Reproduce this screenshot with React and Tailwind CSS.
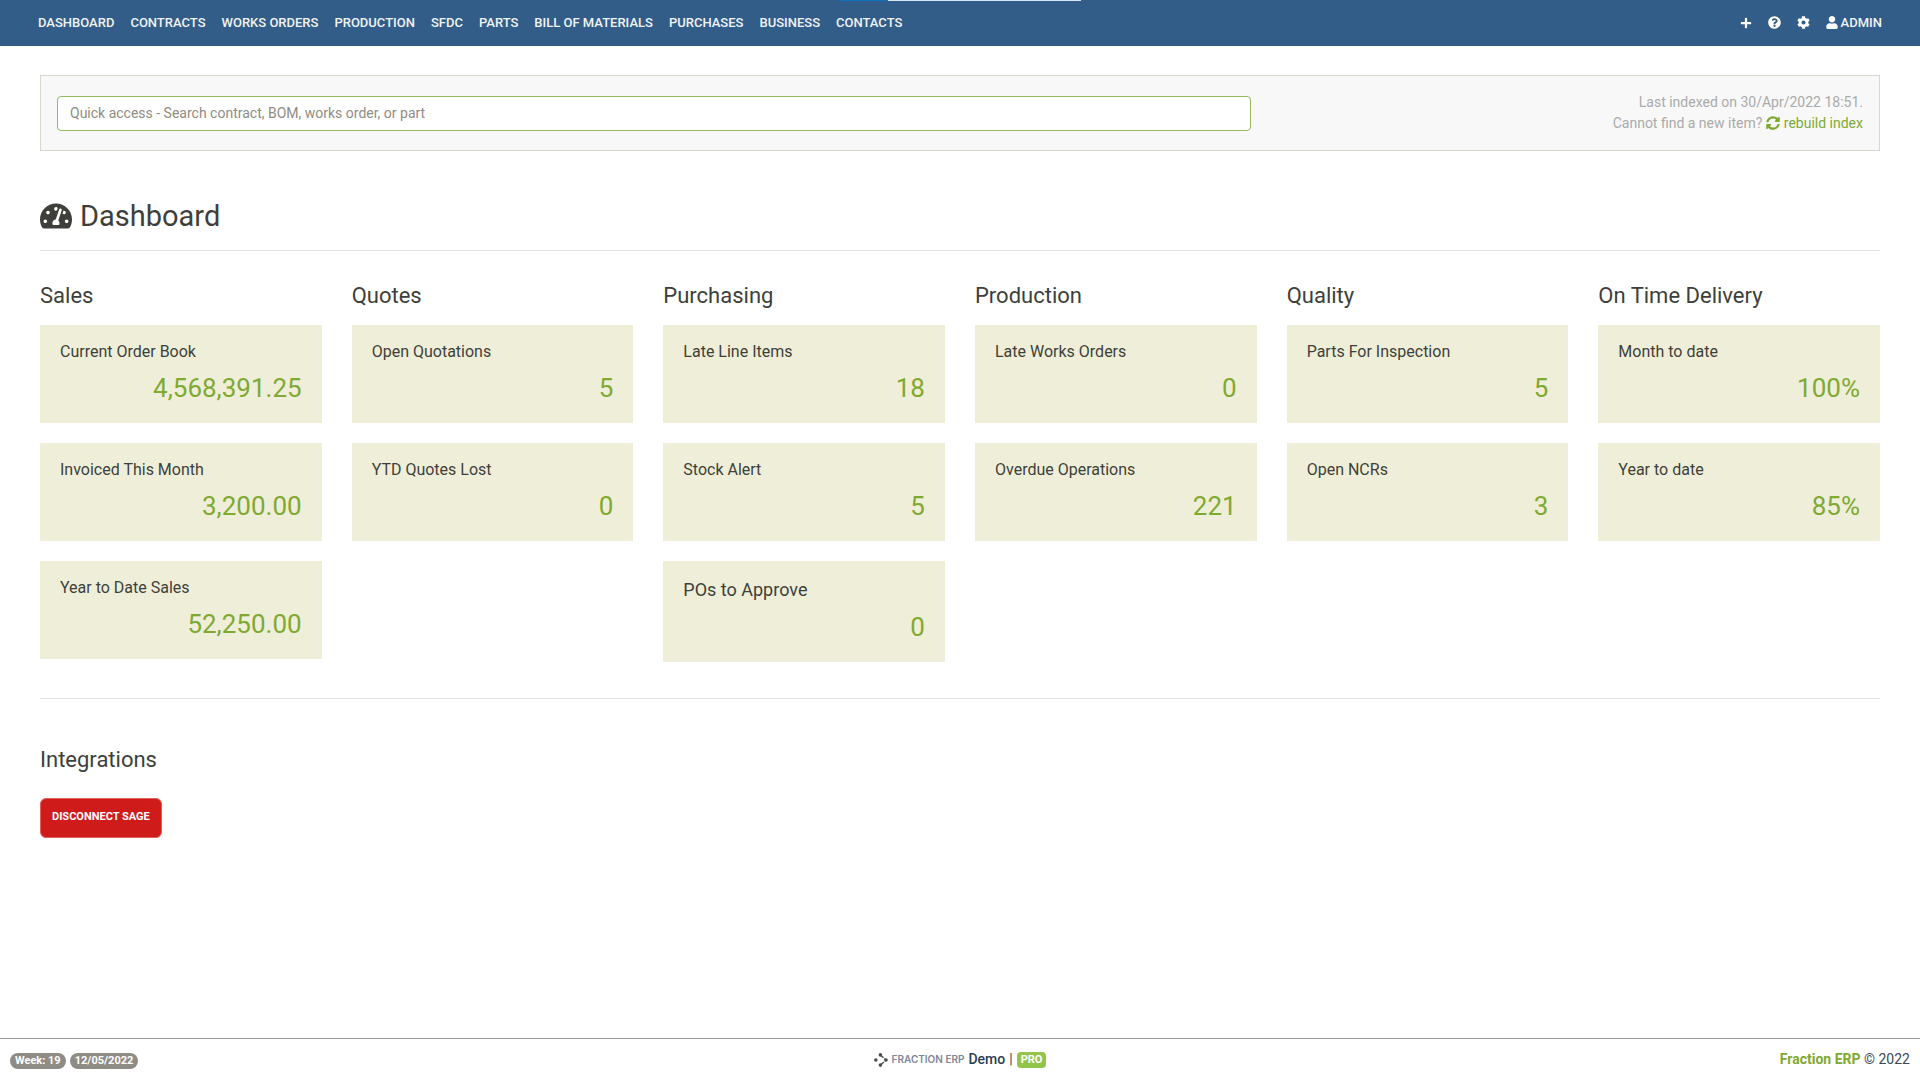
import React, { useState } from 'react';
import {
  FaCog,
  FaPlus,
  FaQuestionCircle,
  FaSyncAlt,
  FaTachometerAlt,
  FaUser,
} from 'react-icons/fa';

const navItems = [
  'Dashboard',
  'Contracts',
  'Works Orders',
  'Production',
  'SFDC',
  'Parts',
  'Bill of Materials',
  'Purchases',
  'Business',
  'Contacts',
];

const columns = [
  {
    title: 'Sales',
    cards: [
      { label: 'Current Order Book', value: '4,568,391.25' },
      { label: 'Invoiced This Month', value: '3,200.00' },
      { label: 'Year to Date Sales', value: '52,250.00' },
    ],
  },
  {
    title: 'Quotes',
    cards: [
      { label: 'Open Quotations', value: '5' },
      { label: 'YTD Quotes Lost', value: '0' },
    ],
  },
  {
    title: 'Purchasing',
    cards: [
      { label: 'Late Line Items', value: '18' },
      { label: 'Stock Alert', value: '5' },
      { label: 'POs to Approve', value: '0', large: true },
    ],
  },
  {
    title: 'Production',
    cards: [
      { label: 'Late Works Orders', value: '0' },
      { label: 'Overdue Operations', value: '221' },
    ],
  },
  {
    title: 'Quality',
    cards: [
      { label: 'Parts For Inspection', value: '5' },
      { label: 'Open NCRs', value: '3' },
    ],
  },
  {
    title: 'On Time Delivery',
    cards: [
      { label: 'Month to date', value: '100%' },
      { label: 'Year to date', value: '85%' },
    ],
  },
];

const TopBar = () => (
  <header className="relative flex h-[46px] items-center justify-between bg-[#325d88] px-[38px] pb-px text-[13px] font-medium text-[#f0f3f6] uppercase">
    {/* Loading strip */}
    <div className="absolute top-0 left-[840px] flex h-px w-[241px]">
      <div className="w-1/5 bg-[#1070c0]" />
      <div className="flex-1 bg-[#d5e8f5]" />
    </div>
    <nav className="flex items-center gap-4">
      {navItems.map((item) => (
        <a key={item} href="#">
          {item}
        </a>
      ))}
    </nav>
    <div className="flex items-center gap-4 text-white">
      <button type="button" aria-label="Add">
        <FaPlus className="size-3" />
      </button>
      <button type="button" aria-label="Help">
        <FaQuestionCircle className="size-[13px]" />
      </button>
      <button type="button" aria-label="Settings">
        <FaCog className="size-[13px]" />
      </button>
      <a href="#" className="flex items-center gap-[3px]">
        <FaUser className="h-[13px] w-[12px]" />
        <span className="text-[#f0f3f6]">Admin</span>
      </a>
    </div>
  </header>
);

const QuickAccess = () => {
  const [query, setQuery] = useState('');

  return (
    <section className="flex items-center justify-between border border-[#d9d6cd] bg-[#f8f8f8] p-4">
      <div className="w-2/3 pr-[10px]">
        <input
          type="text"
          aria-label="Quick access"
          value={query}
          onChange={(e) => setQuery(e.target.value)}
          placeholder="Quick access - Search contract, BOM, works order, or part"
          className="block h-[35px] w-full rounded border border-[#97bb5c] bg-white px-3 text-[14px] text-[#3e3f3a] outline-none placeholder:text-[#8e8c84]"
        />
      </div>
      <p className="text-right text-[14px] leading-[21px] text-[#aaaaaa]">
        Last indexed on 30/Apr/2022 18:51.
        <br />
        Cannot find a new item?{' '}
        <a href="#" className="text-[#7fa932]">
          <FaSyncAlt className="mr-1 inline size-[14px] align-[-2px]" />
          rebuild index
        </a>
      </p>
    </section>
  );
};

const StatCard = ({ label, value, large }) => (
  <a href="#" className="block bg-[#efefd9] px-5 py-[15px]">
    <div className={large ? 'text-[18px] leading-[27px]' : 'text-[16px] leading-6'}>{label}</div>
    <div className="mt-1 text-right text-[26px] leading-10 text-[#7fa932]">{value}</div>
  </a>
);

const ProductLogo = () => (
  <span className="flex items-center gap-1">
    <svg viewBox="0 0 14 14" className="size-[14px]" fill="#4d4d4d" stroke="#4d4d4d">
      <circle cx="1.8" cy="7" r="1.8" stroke="none" />
      <circle cx="6.4" cy="1.9" r="1.8" stroke="none" />
      <circle cx="12" cy="7" r="1.8" stroke="none" />
      <circle cx="6.4" cy="12.1" r="1.8" stroke="none" />
      <path d="M6.4 1.9 12 7 6.4 12.1" fill="none" strokeWidth="1.4" strokeDasharray="4.2 1" />
    </svg>
    <span className="font-[Inter] text-[10px] font-semibold text-[#7c8798]">FRACTION ERP</span>
  </span>
);

const Footer = () => (
  <footer className="grid h-[42px] grid-cols-3 items-center border-t border-[#999999] px-[10px] text-[14px] text-[#3b4754]">
    <div className="flex gap-1 pt-0.5 text-[11px] leading-4 font-bold text-white">
      <span className="rounded-full bg-[#8e8c84] px-[5px]">Week: 19</span>
      <span className="rounded-full bg-[#8e8c84] px-[5px]">12/05/2022</span>
    </div>
    <div className="flex items-center justify-center gap-1">
      <ProductLogo />
      <span className="font-medium text-[#2c3e50]">Demo</span>
      <span>|</span>
      <span className="rounded bg-[#93c54b] px-1 text-[11px] leading-4 font-bold text-white">
        PRO
      </span>
    </div>
    <div className="text-right">
      <a href="#" className="font-bold text-[#7fa932]">
        Fraction ERP
      </a>{' '}
      © 2022
    </div>
  </footer>
);

const App = () => (
  <div className="flex min-h-screen flex-col bg-white font-[Roboto,sans-serif] text-[#3e3f3a]">
    <TopBar />
    <main className="flex-1 px-10 pt-[29px]">
      <QuickAccess />

      <h1 className="mt-[45px] flex items-center gap-2 border-b border-[#e3e3e3] pb-3.5 text-[29px] leading-10">
        <FaTachometerAlt className="size-8" />
        Dashboard
      </h1>

      <div className="mt-7 grid grid-cols-6 items-start gap-[30px]">
        {columns.map((column) => (
          <section key={column.title}>
            <h2 className="mb-3 text-[22px] leading-[34px]">{column.title}</h2>
            <div className="space-y-5">
              {column.cards.map((card) => (
                <StatCard key={card.label} {...card} />
              ))}
            </div>
          </section>
        ))}
      </div>

      <section className="mt-9 border-t border-[#e3e3e3] pt-11">
        <h2 className="mb-[21px] text-[22px] leading-[34px]">Integrations</h2>
        <button
          type="button"
          className="h-10 rounded-md border border-[#e0605c] bg-[#d01b1b] px-[11px] pb-px text-[11px] font-bold text-white uppercase"
        >
          Disconnect Sage
        </button>
      </section>
    </main>
    <Footer />
  </div>
);

export default App;
